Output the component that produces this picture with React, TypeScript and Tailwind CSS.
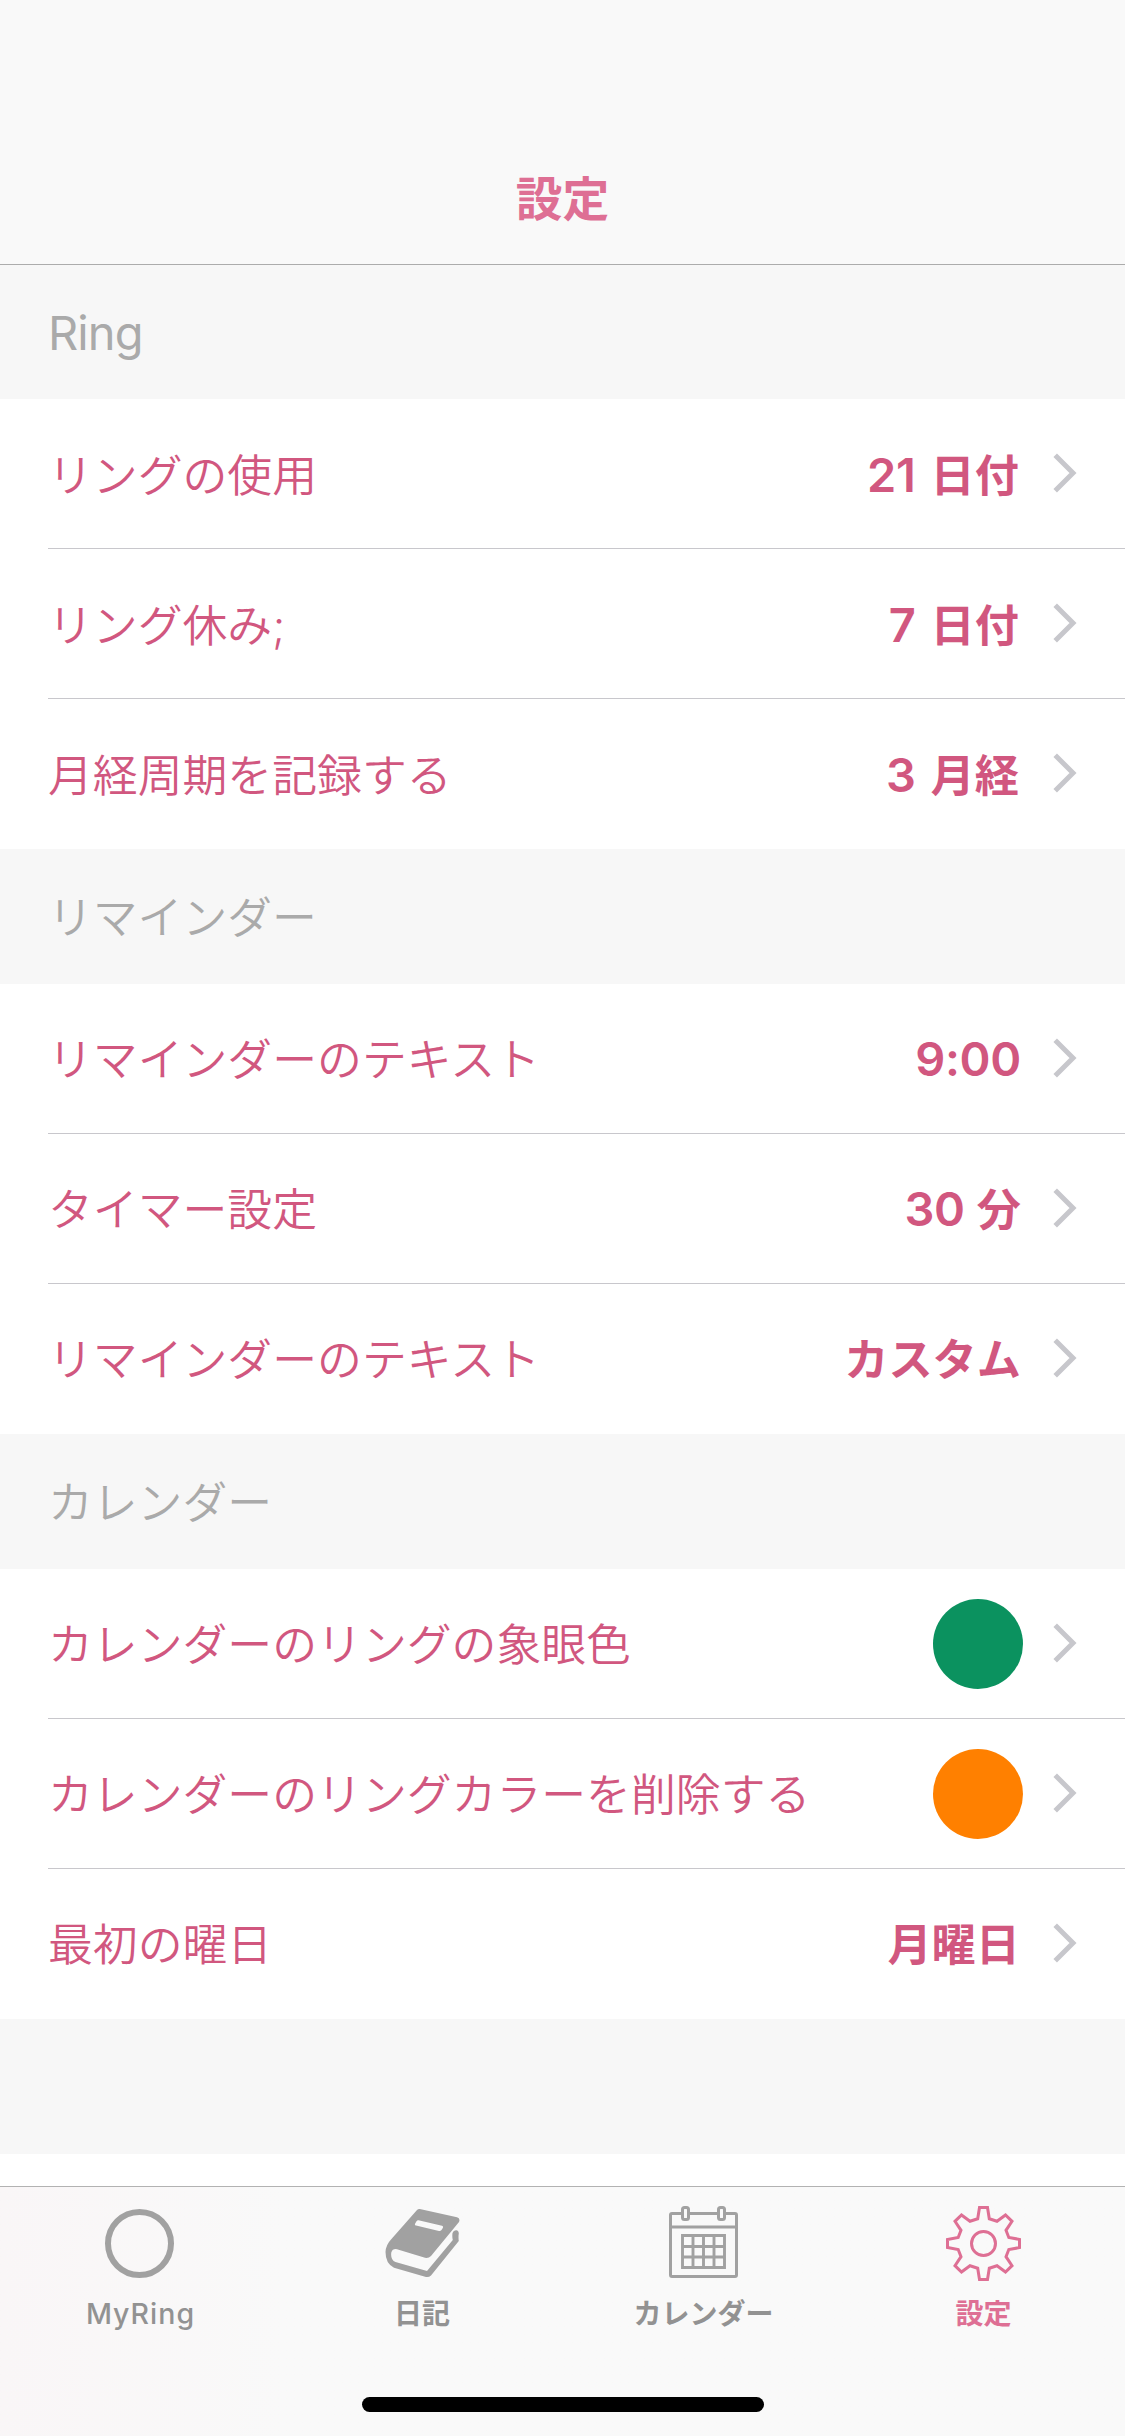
import type { ReactNode } from 'react'

type Row = {
  label: string
  amount?: string
  value?: string
  swatch?: string
}

type Section = {
  title: string
  titleClass: string
  labelClass: string
  valueClass: string
  rows: Row[]
}

const SECTIONS: Section[] = [
  {
    title: 'Ring',
    titleClass: 'h-[134px] text-[47px] font-normal tracking-[-0.9px]',
    labelClass: 'pt-1.5',
    valueClass: 'pt-1.5 mr-[34px] gap-[15px]',
    rows: [
      { label: 'リングの使用', amount: '21', value: '日付' },
      { label: 'リング休み;', amount: '7', value: '日付' },
      { label: '月経周期を記録する', amount: '3', value: '月経' },
    ],
  },
  {
    title: 'リマインダー',
    titleClass: 'h-[135px] text-[44.8px] font-[350] pt-1',
    labelClass: 'pt-[3px]',
    valueClass: 'pt-[3px] mr-8 gap-3',
    rows: [
      { label: 'リマインダーのテキスト', amount: '9:00' },
      { label: 'タイマー設定', amount: '30', value: '分' },
      { label: 'リマインダーのテキスト', value: 'カスタム' },
    ],
  },
  {
    title: 'カレンダー',
    titleClass: 'h-[135px] text-[44.8px] font-[350] pt-1',
    labelClass: 'pt-[3px]',
    valueClass: 'pt-1 mr-[33px]',
    rows: [
      { label: 'カレンダーのリングの象眼色', swatch: 'bg-[#0b925f]' },
      { label: 'カレンダーのリングカラーを削除する', swatch: 'bg-[#ff8000]' },
      { label: '最初の曜日', value: '月曜日' },
    ],
  },
]

function Chevron() {
  return (
    <svg width="24" height="40" viewBox="0 0 24 40" fill="none" className="mb-0.5 shrink-0">
      <path d="M2.2 2.2 L20 20 L2.2 37.8" stroke="#c7c7cc" strokeWidth="5" />
    </svg>
  )
}

type SettingsRowProps = {
  row: Row
  last: boolean
  labelClass: string
  valueClass: string
}

function SettingsRow({ row, last, labelClass, valueClass }: SettingsRowProps) {
  return (
    <li className="h-[150px] pl-12">
      <div
        className={`flex h-full items-center border-b pr-12 ${last ? 'border-transparent' : 'border-[#c8c7cc]'}`}
      >
        <span
          className={`flex-1 whitespace-nowrap text-[44.85px] font-[350] leading-none text-[#d1577f] ${labelClass}`}
        >
          {row.label}
        </span>
        {!row.swatch && (
          <span
            className={`flex items-baseline whitespace-nowrap font-semibold leading-none text-[#d1577f] ${valueClass} ${row.amount ? 'mb-[3px]' : ''}`}
          >
            {row.amount && <span className="text-[47px] leading-none tracking-[-0.3px]">{row.amount}</span>}
            {row.value && <span className="text-[44.2px] leading-none">{row.value}</span>}
          </span>
        )}
        {row.swatch && <span className={`mr-[30px] size-[90px] rounded-full ${row.swatch}`} />}
        <Chevron />
      </div>
    </li>
  )
}

function RingIcon() {
  return (
    <svg width="75" height="75" viewBox="0 0 75 75" fill="none">
      <circle cx="37.5" cy="37.5" r="31.5" stroke="currentColor" strokeWidth="6" />
    </svg>
  )
}

function BookIcon() {
  return (
    <svg width="75" height="75" viewBox="0 0 75 75" fill="currentColor" fillRule="evenodd">
      <path d="M34.8 3 L72 11.3 Q75.500 12.300 74 16 L46 50 Q43.500 52.500 40 51.800 L12 43.200 Q7.500 42.500 6.300 46.500 Q5.300 54 10.500 56 L42 65 L67.800 34 Q67 31 67.500 27 Q68.500 24 71.200 24.200 Q73.800 24.500 73.800 27.500 Q73.200 31 73.800 35 L46 69.500 Q44 71.500 41 71 L9 61.800 Q0.500 57.500 0.500 46 Q0.800 39 6 33.500 L32 4 Q33.500 2.500 34.800 3 Z M33.500 14.300 L57 19.800 Q58.600 20.400 57.800 22 L56.500 24 Q55.500 25.300 54 25 L31 19.500 Q29.300 19 30.200 17.400 L31.500 15.200 Q32.300 14.100 33.500 14.300 Z" />
    </svg>
  )
}

function CalendarIcon() {
  return (
    <svg width="75" height="75" viewBox="0 0 75 75" fill="none" stroke="currentColor" strokeWidth="3">
      <path d="M16 7.500 H6 Q4.500 7.500 4.500 9 V69 Q4.500 70.500 6 70.500 H69 Q70.500 70.500 70.500 69 V9 Q70.500 7.500 69 7.500 H59 M52 7.500 H23" />
      <path d="M4.500 21 H70.500" />
      <rect x="16.500" y="1.500" width="6" height="12" rx="2" />
      <rect x="52.500" y="1.500" width="6" height="12" rx="2" />
      <path
        d="M16.500 29.500 H58.500 V61.500 H16.500 Z M16.500 40.500 H58.500 M16.500 51 H58.500 M27 29.500 V61.500 M37.500 29.500 V61.500 M48 29.500 V61.500"
        strokeWidth="2.900"
      />
    </svg>
  )
}

function GearIcon() {
  return (
    <svg width="75" height="75" viewBox="0 0 75 75" fill="none" stroke="currentColor" strokeWidth="3">
      <path d="M33.500 1.500 H41.500 L43.300 12.800 L51 15.300 L59.500 9 L66 15.300 L60 24.300 L62.800 31.500 L73.500 33.400 V41.600 L62.800 43.500 L60 50.700 L66 59.700 L59.500 66 L51 59.700 L43.300 62.200 L41.500 73.500 H33.500 L31.700 62.200 L24 59.700 L15.500 66 L9 59.700 L15 50.700 L12.200 43.500 L1.500 41.600 V33.400 L12.200 31.500 L15 24.300 L9 15.300 L15.500 9 L24 15.300 L31.700 12.800 Z" />
      <circle cx="37.500" cy="37.500" r="12" />
    </svg>
  )
}

type TabProps = {
  label: string
  width: string
  labelClass: string
  active?: boolean
  children: ReactNode
}

function Tab({ label, width, labelClass, active, children }: TabProps) {
  return (
    <button
      className={`flex flex-col items-center pt-[19px] ${width} ${active ? 'text-[#de6f94]' : 'text-[#a1a1a1]'}`}
    >
      {children}
      <span
        className={`mt-4 whitespace-nowrap leading-[34px] ${labelClass} ${active ? 'text-[#de6f94]' : 'text-[#929292]'}`}
      >
        {label}
      </span>
    </button>
  )
}

export default function App() {
  return (
    <div className="flex h-[2436px] w-[1125px] flex-col overflow-hidden bg-white font-['Inter','Noto_Sans_CJK_JP',sans-serif]">
      {/* Nav bar */}
      <header className="flex h-[265px] shrink-0 items-end justify-center border-b border-[#acacac] bg-[#f9f9f9] pb-10">
        <h1 className="text-[46.7px] font-bold leading-[50px] text-[#de6f94]">設定</h1>
      </header>

      {/* Settings list */}
      <main className="flex-1 overflow-hidden">
        {SECTIONS.map((section) => (
          <section key={section.title}>
            <h2
              className={`flex items-center bg-[#f7f7f7] pl-12 leading-none text-[#aaaaaa] ${section.titleClass}`}
            >
              {section.title}
            </h2>
            <ul>
              {section.rows.map((row, j) => (
                <SettingsRow
                  key={j}
                  row={row}
                  last={j === section.rows.length - 1}
                  labelClass={section.labelClass}
                  valueClass={section.valueClass}
                />
              ))}
            </ul>
          </section>
        ))}
        <div className="h-[135px] bg-[#f7f7f7]" />
      </main>

      {/* Tab bar */}
      <nav className="flex h-[250px] shrink-0 flex-col items-center border-t border-[#b2b2b2] bg-[#f9f9f9] bg-linear-to-r from-[#f9f6f7] to-[#f9f9f9] to-25%">
        <div className="flex w-full">
          <Tab label="MyRing" width="w-[279px]" labelClass="pl-0.5 text-[28.5px] font-medium tracking-[1px]">
            <RingIcon />
          </Tab>
          <Tab label="日記" width="w-[286px]" labelClass="text-[28px] font-bold">
            <BookIcon />
          </Tab>
          <Tab label="カレンダー" width="w-[277px]" labelClass="text-[28px] font-bold">
            <CalendarIcon />
          </Tab>
          <Tab label="設定" width="w-[283px]" labelClass="text-[28px] font-bold" active>
            <GearIcon />
          </Tab>
        </div>
        <div className="mb-6 mt-auto h-[15px] w-[402px] rounded-full bg-black" />
      </nav>
    </div>
  )
}
